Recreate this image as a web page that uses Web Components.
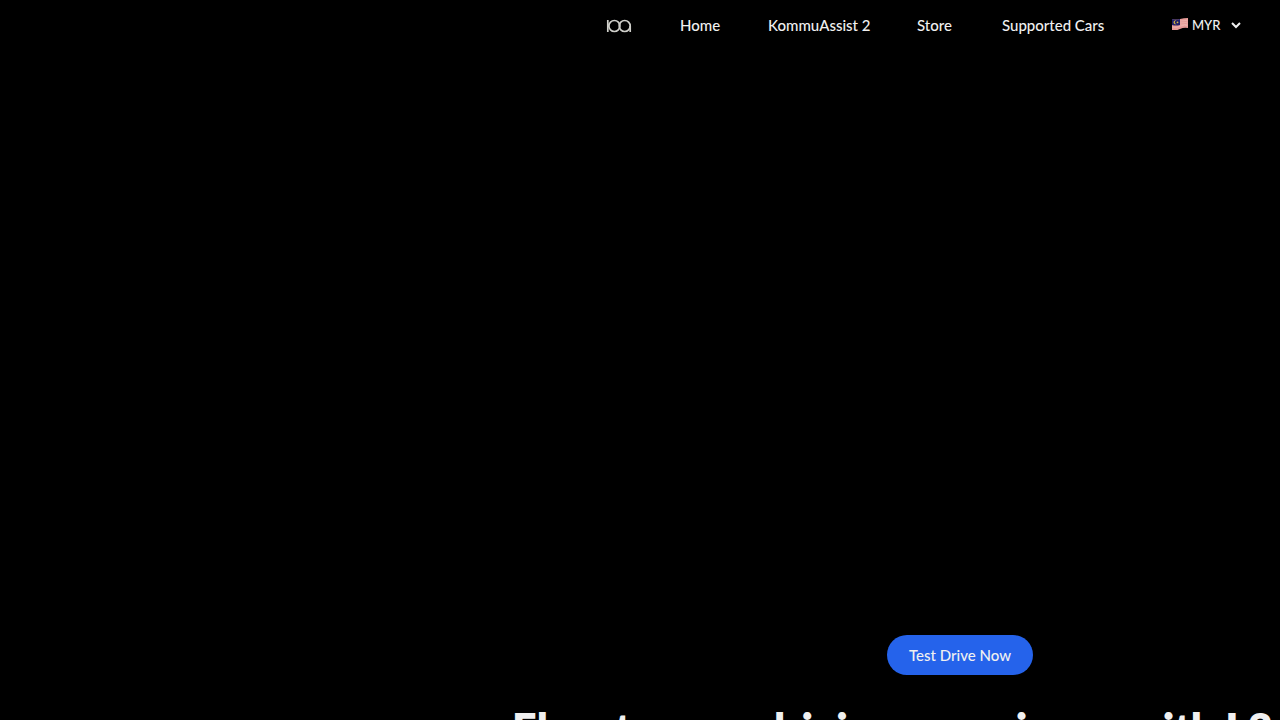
<!DOCTYPE html>
<html lang="en">
<head>
<meta charset="utf-8">
<meta name="viewport" content="width=device-width, initial-scale=1">
<title>Kommu</title>
<style>
html,body{margin:0;background:#000}
body{font-family:Lato,"Liberation Sans",sans-serif;color:#f0f0f0}
</style>
</head>
<body>
<kommu-page>
<kommu-nav slot="nav">
<nav-item href="#home">Home</nav-item>
<nav-item href="#ka2">KommuAssist 2</nav-item>
<nav-item href="#store">Store</nav-item>
<nav-item href="#cars">Supported Cars</nav-item>
<currency-picker slot="end"></currency-picker>
</kommu-nav>
<pill-button slot="action">Test Drive Now</pill-button>
<hero-title>Elevate your driving experience with L2</hero-title>
</kommu-page>
<script>
const define=(name,html)=>customElements.define(name,class extends HTMLElement{
  constructor(){
    super();
    this.attachShadow({mode:'open'}).innerHTML=html;
    const a=this.shadowRoot.querySelector('a[data-link]');
    if(a)a.href=this.getAttribute('href');
  }
});
define('kommu-page',`<style>
:host{display:flex;flex-direction:column;height:100vh;overflow:hidden}
main{flex:1;min-height:0;display:flex;flex-direction:column}
.action{flex:1 0 auto;margin-left:50%;display:flex;align-items:flex-end;justify-content:center}
.title{margin-left:40%;height:45px}
</style><slot name="nav"></slot><main><div class="action"><slot name="action"></slot></div><div class="title"><slot></slot></div></main>`);
define('kommu-nav',`<style>
:host{display:block}
nav{display:flex;justify-content:flex-end;align-items:center;height:50px;padding-right:38px}
.logo{display:flex;width:74px;padding-top:2px}
.links{display:grid;grid-template-columns:88px 149px 85px 170px}
</style><nav aria-label="Main"><a class="logo" href="#home" aria-label="Kommu">
<svg width="26" height="14" viewBox="0 0 26 14" fill="none" stroke="#cfcfca" stroke-width="1.7"><path d="M1.8 1V13M24.2 7V13M1.8 7H3"/><circle cx="8.4" cy="7" r="5.5"/><circle cx="18.7" cy="7" r="5.5"/></svg></a>
<div class="links"><slot></slot></div><slot name="end"></slot></nav>`);
define('nav-item',`<style>
:host{display:block}
a{color:inherit;text-decoration:none;font-size:15px;line-height:24px;font-weight:500;white-space:nowrap}
</style><a data-link><slot></slot></a>`);
define('currency-picker',`<style>
:host{display:block}
label{display:flex;align-items:center;gap:4px}
.flag{margin-bottom:2px}
.field{display:grid;align-items:center;width:50px}
select,.chev{grid-area:1/1}
select{appearance:none;background:transparent;border:0;margin:0;padding:0;width:100%;font:500 13px/20px Lato,sans-serif;color:#f0f0f0}
.chev{justify-self:end;pointer-events:none}
</style><label><svg class="flag" width="16" height="12" viewBox="0 0 16 12" aria-hidden="true">
<path d="M0 1Q4 2 8 1T16 0V10Q12 9 8 11T0 12Z" fill="#e69b98"/>
<path d="M8 3Q12 3 16 2M8 5Q12 5 16 4M8 7Q12 7 16 6M0 9Q5 10 9 8T16 8" fill="none" stroke="#f0bbb5" stroke-width=".7"/>
<path d="M0 1Q4 2 8 1V7Q4 8 0 7Z" fill="#20206b"/><path d="M4.5 2.6a2 2 0 1 0 0 3.5 1.6 1.6 0 0 1 0-3.5Z" fill="#d8b840"/><circle cx="5.5" cy="4.3" r=".9" fill="#d8b840"/></svg>
<span class="field"><select aria-label="Currency"><option>MYR</option></select>
<svg class="chev" width="12" height="12" viewBox="0 0 12 12" fill="none" stroke="#f0f0f0" stroke-width="2"><path d="M2 4L6 8L10 4"/></svg></span></label>`);
define('pill-button',`<style>
:host{display:block}
button{display:block;border:0;border-radius:20px;background:#2563eb;color:#f0f0f0;height:40px;width:146px;padding:0;font:500 15px/24px Lato,sans-serif;white-space:nowrap}
</style><button type="button"><slot></slot></button>`);
define('hero-title',`<style>
:host{display:block}
h1{margin:0;padding-top:24px;font-size:43px;line-height:60px;font-weight:800;white-space:nowrap}
</style><h1><slot></slot></h1>`);
</script>
</body>
</html>
